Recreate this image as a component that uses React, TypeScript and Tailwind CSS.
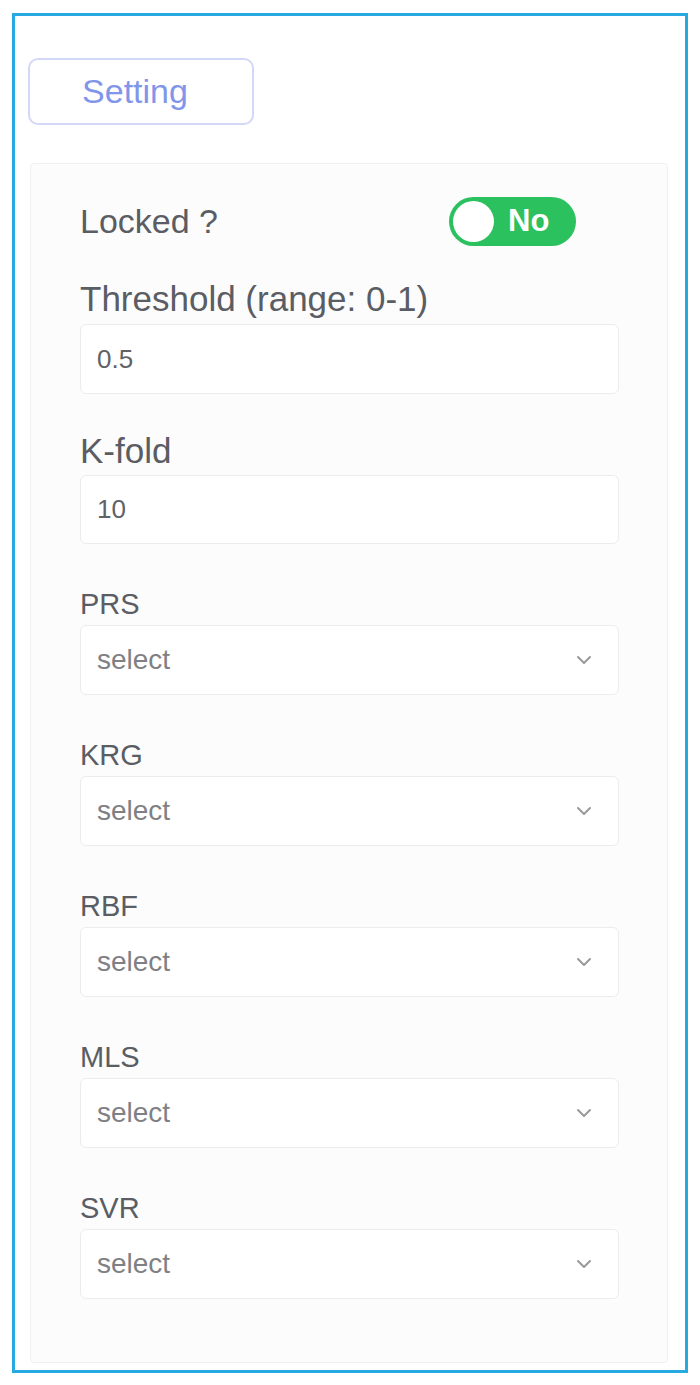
import React from "react";

const font = { fontFamily: '"Liberation Sans", Arial, Helvetica, sans-serif' };

function Chevron() {
  return (
    <svg width="16" height="10" viewBox="0 0 16 10" fill="none">
      <path d="M2 2 L8 8 L14 2" stroke="#9a9a9a" strokeWidth="2" strokeLinecap="round" strokeLinejoin="round" />
    </svg>
  );
}

function SelectField({ label }: { label: string }) {
  return (
    <div className="flex flex-col mt-[47px]">
      <div className="h-[26px] leading-[26px] text-[29px] text-[#5a5d63]">{label}</div>
      <div className="mt-[8px] w-[539px] h-[70px] border border-[#ececec] rounded-[6px] bg-white flex items-center justify-between pl-[16px] pr-[26px]">
        <span className="text-[28px] text-[#7f8084]">select</span>
        <Chevron />
      </div>
    </div>
  );
}

export default function App() {
  return (
    <div className="w-[700px] h-[1385px] bg-white pt-[13px] pl-[12px]" style={font}>
      <div className="w-[676px] h-[1360px] border-[3px] border-[#27aae1] flex flex-col pl-[13px] pt-[42px]">
        <div className="w-[226px] h-[67px] border-2 border-[#d3d8f8] rounded-[10px] flex items-center justify-center">
          <span className="text-[34px] text-[#8196ea] -ml-[12px]">Setting</span>
        </div>
        <div className="mt-[38px] ml-[2px] w-[638px] h-[1200px] border border-[#f0f0f0] rounded-[4px] bg-[#fcfcfc] flex flex-col pl-[49px] pt-[33px]">
          <div className="w-[496px] h-[49px] flex items-center justify-between">
            <span className="text-[34px] text-[#5a5d63]">Locked ?</span>
            <div className="w-[127px] h-[49px] rounded-full bg-[#2cc15f] flex items-center pl-[4px]">
              <div className="w-[41px] h-[41px] rounded-full bg-white" />
              <span className="ml-[14px] text-[31px] text-white font-bold">No</span>
            </div>
          </div>
          <div className="mt-[37px] h-[32px] leading-[32px] text-[35px] text-[#5a5d63]">Threshold (range: 0-1)</div>
          <div className="mt-[9px] w-[539px] h-[70px] border border-[#ececec] rounded-[6px] bg-white flex items-center pl-[16px]">
            <span className="text-[26px] text-[#606266]">0.5</span>
          </div>
          <div className="mt-[41px] h-[32px] leading-[32px] text-[35px] text-[#5a5d63]">K-fold</div>
          <div className="mt-[8px] w-[539px] h-[69px] border border-[#ececec] rounded-[6px] bg-white flex items-center pl-[16px]">
            <span className="text-[26px] text-[#606266]">10</span>
          </div>
          <SelectField label="PRS" />
          <SelectField label="KRG" />
          <SelectField label="RBF" />
          <SelectField label="MLS" />
          <SelectField label="SVR" />
        </div>
      </div>
    </div>
  );
}
